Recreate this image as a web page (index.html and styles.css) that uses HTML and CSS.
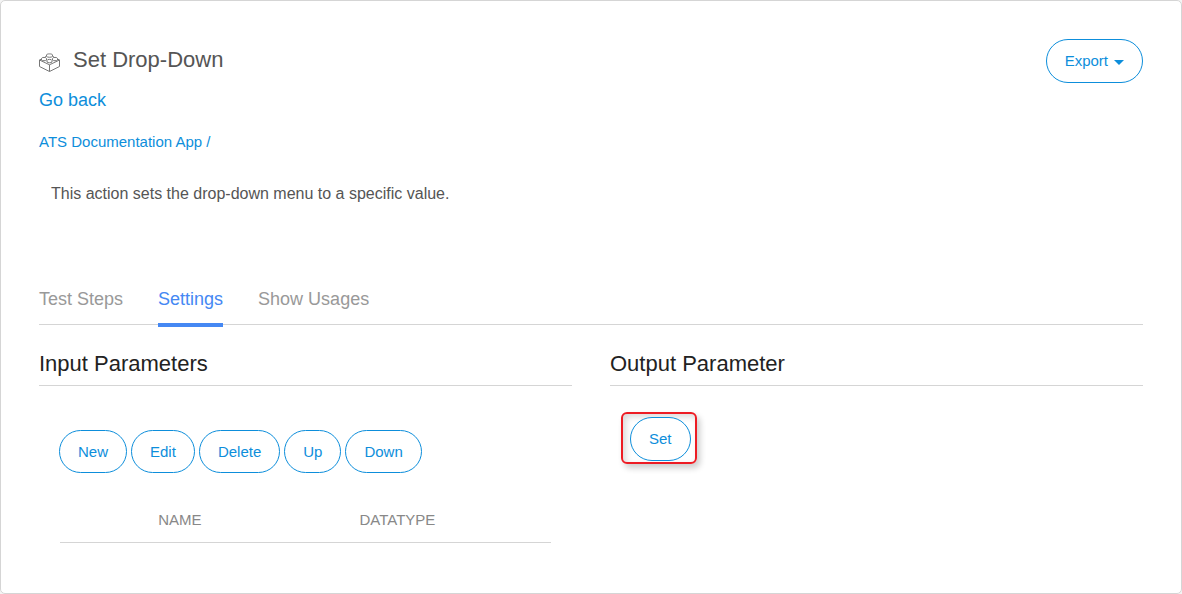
FILE: index.html
```html
<!DOCTYPE html>
<html lang="en">
<head>
<meta charset="utf-8">
<meta name="viewport" content="width=device-width, initial-scale=1">
<title>Set Drop-Down</title>
<link rel="stylesheet" href="styles.css">
</head>
<body>
<main class="card">
  <header class="page-header">
    <div class="page-info">
      <div class="title-row">
        <svg class="brick" viewBox="0 0 22 20" aria-hidden="true">
          <path d="M2.500 7 .5 8V14.500L10.500 19.500 20.500 14.500V8L18.500 7M.5 8 10.500 12.800 20.500 8M10.500 12.800V19.500"/>
          <path d="M7.500 4.500V3C7.500 1.500 13.500 1.500 13.500 3V4.500C12.500 5.500 8.500 5.500 7.500 4.500M7 4.500 6 5M14 4.500 15 5"/>
          <path d="M2.500 8V6.500C2.500 5 7.500 5 7.500 6.500V8C6.500 9 3.500 9 2.500 8M13.500 8V6.500C13.500 5 18.500 5 18.500 6.500V8C17.500 9 14.500 9 13.500 8"/>
          <path d="M8 10V8.500C8 7 13 7 13 8.500V10C12 11 9 11 8 10"/>
        </svg>
        <h1 class="title">Set Drop-Down</h1>
      </div>
      <a class="back" href="#">Go back</a>
      <nav class="crumbs" aria-label="Breadcrumb"><a href="#">ATS Documentation App /</a></nav>
    </div>
    <button class="pill export" type="button">Export <span class="caret"></span></button>
  </header>
  <p class="description">This action sets the drop-down menu to a specific value.</p>
  <nav class="tabs" aria-label="Sections">
    <a class="tab" href="#">Test Steps</a>
    <a class="tab active" href="#" aria-current="page">Settings</a>
    <a class="tab" href="#">Show Usages</a>
  </nav>
  <div class="columns">
    <section>
      <h2 class="heading">Input Parameters</h2>
      <div class="inputs">
        <div class="actions">
          <button class="pill" type="button">New</button>
          <button class="pill" type="button">Edit</button>
          <button class="pill" type="button">Delete</button>
          <button class="pill" type="button">Up</button>
          <button class="pill" type="button">Down</button>
        </div>
        <div class="table-wrap">
          <table class="params">
            <thead><tr><th class="select-col"></th><th class="name-col">NAME</th><th>DATATYPE</th></tr></thead>
          </table>
        </div>
      </div>
    </section>
    <section>
      <h2 class="heading">Output Parameter</h2>
      <div class="highlight"><button class="pill" type="button">Set</button></div>
    </section>
  </div>
</main>
</body>
</html>
```
FILE: styles.css
```css
* { box-sizing: border-box; }
html { background: #f4f4f4; }
body {
  margin: 0;
  font-family: "Liberation Sans", Arial, sans-serif;
  color: #555;
}
a { color: #0d8edb; text-decoration: none; }
.card {
  min-height: 100vh;
  padding: 38px;
  background: #fff;
  border: 1px solid #d5d5d5;
  border-radius: 5px;
}
.page-header { display: flex; justify-content: space-between; align-items: flex-start; }
.title-row { display: flex; align-items: center; gap: 12px; height: 42px; }
.brick { width: 22px; height: 20px; margin-top: 4px; fill: none; stroke: #777; stroke-width: 1; stroke-linejoin: round; }
.title { margin: 0; font-size: 22px; font-weight: 400; line-height: 28px; }
.back { display: block; font-size: 18px; line-height: 38px; }
.crumbs { padding-top: 13px; font-size: 15px; line-height: 20px; }
.pill {
  height: 44px;
  padding: 0 18px;
  border: 1px solid #0d8edb;
  border-radius: 22px;
  background: #fff;
  color: #0d8edb;
  font: 15px/20px "Liberation Sans", Arial, sans-serif;
}
.export { display: flex; align-items: center; gap: 6px; }
.caret { border: 5px solid transparent; border-top-color: #0d8edb; border-bottom: 0; margin-top: 2px; }
.description { margin: 32px 12px 0; font-size: 16px; line-height: 20px; }
.tabs {
  display: flex;
  gap: 35px;
  margin-top: 81px;
  border-bottom: 1px solid #d5d5d5;
  font-size: 18px;
  line-height: 28px;
}
.tab { height: 42px; margin-bottom: -3px; color: #999; }
.active { color: #4588f3; border-bottom: 4px solid #4588f3; }
.columns { display: grid; grid-template-columns: 1fr 1fr; gap: 38px; margin-top: 23px; }
.heading {
  margin: 0;
  padding-bottom: 5px;
  border-bottom: 1px solid #d5d5d5;
  color: #222;
  font-size: 22px;
  font-weight: 400;
  line-height: 32px;
}
.inputs { padding: 44px 21px 0 20px; }
.actions { display: flex; gap: 4px; }
.actions .pill { height: 43px; }
.table-wrap { padding: 24px 0 0 1px; }
.params { width: 100%; border-collapse: collapse; table-layout: fixed; border-bottom: 1px solid #d5d5d5; }
.params th { height: 45px; padding: 0; color: #888; font-size: 15px; font-weight: 400; text-align: left; }
.params .select-col { width: 20%; }
.params .name-col { width: 41%; }
.highlight {
  width: fit-content;
  margin: 26px 11px;
  padding: 3px 4px 1px 7px;
  border: 2px solid #ed1c24;
  border-radius: 6px;
  box-shadow: 3px 4px 6px rgba(0, 0, 0, .2), inset 3px 3px 6px rgba(0, 0, 0, .15);
}
.highlight .pill { display: block; }
```
